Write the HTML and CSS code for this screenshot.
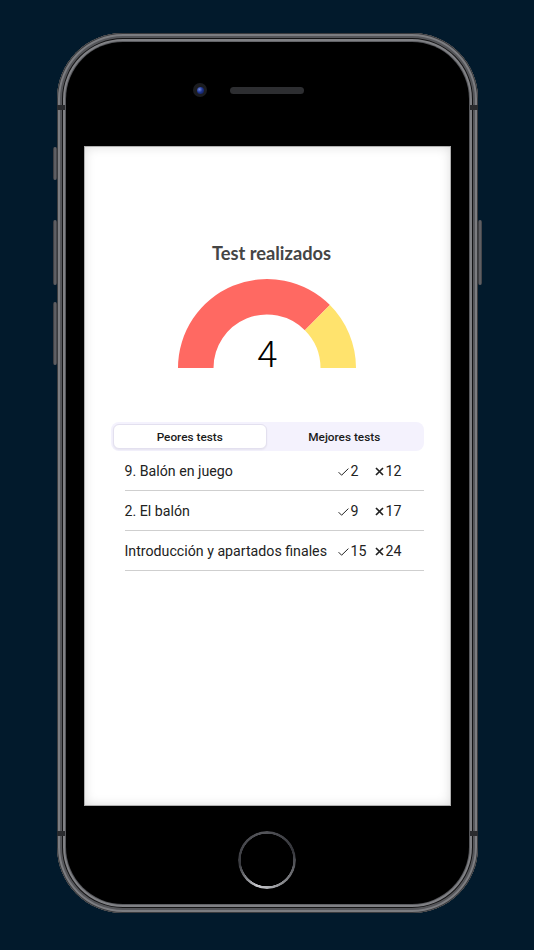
FILE: index.html
```html
<!DOCTYPE html>
<html lang="es">
<head>
<meta charset="utf-8">
<title>Test realizados</title>
<link rel="stylesheet" href="styles.css">
</head>
<body>
<div class="stage">
  <div class="phone">
    <span class="btn btn-mute"></span>
    <span class="btn btn-vol-up"></span>
    <span class="btn btn-vol-down"></span>
    <span class="btn btn-power"></span>
    <span class="band band-tl"></span>
    <span class="band band-tr"></span>
    <span class="band band-bl"></span>
    <span class="band band-br"></span>
    <div class="bezel">
      <div class="top">
        <div class="sensors">
          <span class="camera"><span class="lens"></span></span>
          <span class="speaker"></span>
          <span></span>
        </div>
      </div>
      <div class="screen">
        <h1 class="title">Test realizados</h1>
        <div class="gauge">
          <svg class="gauge-svg" viewBox="0 0 180 90" width="180" height="90">
            <path d="M1 90 A89 89 0 0 1 152.93 27.07 L127.83 52.17 A53.5 53.5 0 0 0 36.5 90 Z" fill="#ff6962"/>
            <path d="M152.93 27.07 A89 89 0 0 1 179 90 L143.5 90 A53.5 53.5 0 0 0 127.83 52.17 Z" fill="#ffe36d"/>
          </svg>
          <span class="gauge-value">4</span>
        </div>
        <div class="tabs">
          <button class="tab tab-active">Peores tests</button>
          <button class="tab">Mejores tests</button>
        </div>
        <ul class="list">
          <li class="row">
            <span class="name">9. Balón en juego</span>
            <span class="stats">
              <span class="stat"><svg class="ico" viewBox="0 0 11 8" width="11" height="8"><path d="M0.6 4.2 L3.6 7.2 L10.4 0.6" fill="none" stroke="#222" stroke-width="1"/></svg>2</span>
              <span class="stat"><svg class="ico" viewBox="0 0 9 9" width="9" height="9"><path d="M1 1 L8 8 M8 1 L1 8" fill="none" stroke="#222" stroke-width="1.7"/></svg>12</span>
            </span>
          </li>
          <li class="row">
            <span class="name">2. El balón</span>
            <span class="stats">
              <span class="stat"><svg class="ico" viewBox="0 0 11 8" width="11" height="8"><path d="M0.6 4.2 L3.6 7.2 L10.4 0.6" fill="none" stroke="#222" stroke-width="1"/></svg>9</span>
              <span class="stat"><svg class="ico" viewBox="0 0 9 9" width="9" height="9"><path d="M1 1 L8 8 M8 1 L1 8" fill="none" stroke="#222" stroke-width="1.7"/></svg>17</span>
            </span>
          </li>
          <li class="row">
            <span class="name">Introducción y apartados finales</span>
            <span class="stats">
              <span class="stat"><svg class="ico" viewBox="0 0 11 8" width="11" height="8"><path d="M0.6 4.2 L3.6 7.2 L10.4 0.6" fill="none" stroke="#222" stroke-width="1"/></svg>15</span>
              <span class="stat"><svg class="ico" viewBox="0 0 9 9" width="9" height="9"><path d="M1 1 L8 8 M8 1 L1 8" fill="none" stroke="#222" stroke-width="1.7"/></svg>24</span>
            </span>
          </li>
        </ul>
      </div>
      <div class="bottom">
        <span class="home"></span>
      </div>
    </div>
  </div>
</div>
</body>
</html>
```

FILE: styles.css
```css
* { box-sizing: border-box; }
html, body { margin: 0; padding: 0; }
body {
  background: #021a2c;
  width: 534px;
  height: 950px;
  overflow: hidden;
  font-family: Roboto, "Liberation Sans", sans-serif;
}
.stage {
  display: flex;
  justify-content: center;
  padding-top: 33px;
}
.phone {
  position: relative;
  width: 421px;
  height: 880px;
  border-radius: 66px;
  padding: 9px;
  background: linear-gradient(90deg, #55565a 0%, #67686c 50%, #55565a 100%);
  box-shadow:
    inset 0 0 0 1px #3a3b3e,
    inset 0 0 0 3px #7c7d81,
    inset 0 0 0 5px #55565a,
    inset 0 0 0 6px #141415,
    inset 0 0 0 8px #808185;
}
.btn {
  position: absolute;
  width: 4px;
  border-radius: 2px;
  background: linear-gradient(90deg, #2e2f33, #6a6b70, #3a3b3f);
}
.btn-mute { left: -4px; top: 114px; height: 33px; }
.btn-vol-up { left: -4px; top: 187px; height: 65px; }
.btn-vol-down { left: -4px; top: 269px; height: 63px; }
.btn-power { right: -4px; top: 187px; height: 65px; }
.band {
  position: absolute;
  width: 8px;
  height: 5px;
  background: #2a2b2e;
}
.band-tl { left: 0; top: 72px; }
.band-tr { right: 0; top: 72px; }
.band-bl { left: 0; top: 798px; }
.band-br { right: 0; top: 798px; }
.bezel {
  height: 100%;
  border-radius: 57px;
  background: #000;
  display: flex;
  flex-direction: column;
  overflow: hidden;
}
.top {
  height: 104px;
  padding-top: 41px;
  flex: none;
}
.sensors {
  display: grid;
  grid-template-columns: 1fr auto 1fr;
  align-items: center;
  height: 14px;
}
.camera {
  justify-self: end;
  margin-right: 23px;
  width: 14px;
  height: 14px;
  border-radius: 50%;
  background: #1b1c20;
  display: flex;
  align-items: center;
  justify-content: center;
}
.lens {
  width: 7px;
  height: 7px;
  border-radius: 50%;
  background: radial-gradient(circle at 35% 35%, #6f86d8 0%, #1f3590 45%, #0b1440 100%);
}
.speaker {
  width: 74px;
  height: 7px;
  border-radius: 4px;
  background: #2d2e31;
}
.screen {
  flex: none;
  height: 660px;
  margin: 0 18px;
  background: #fff;
  box-shadow: inset 0 0 0 1px rgba(0,0,0,0.25), inset 0 0 12px rgba(0,0,0,0.16);
  padding-top: 95px;
  display: flex;
  flex-direction: column;
  align-items: center;
}
.title {
  margin: 0 0 0 9px;
  font-family: Lato, "Open Sans", sans-serif;
  font-weight: 700;
  font-size: 18.3px;
  line-height: 24px;
  color: #454545;
}
.gauge {
  position: relative;
  margin-top: 13px;
  width: 180px;
  height: 90px;
}
.gauge-svg { display: block; }
.gauge-value {
  position: absolute;
  left: 0;
  right: 0;
  bottom: -5px;
  text-align: center;
  font-family: Roboto, sans-serif;
  font-weight: 300;
  font-size: 36px;
  line-height: 36px;
  color: #000;
}
.tabs {
  margin-top: 54px;
  align-self: stretch;
  margin-left: 27px;
  margin-right: 27px;
  height: 29px;
  background: #f4f2fd;
  border-radius: 8px;
  padding: 2px;
  display: grid;
  grid-template-columns: 1fr 1fr;
}
.tab {
  border: 0;
  background: transparent;
  font-family: Roboto, sans-serif;
  font-weight: 500;
  font-size: 11.8px;
  color: #1a1a1a;
  padding: 0;
  border-radius: 6px;
}
.tab-active {
  background: #fff;
  border: 1px solid #e3e0ef;
  box-shadow: 0 1px 2px rgba(0,0,0,0.06);
}
.list {
  list-style: none;
  margin: 0 27px 0 41px;
  padding: 0;
  align-self: stretch;
}
.row {
  height: 40px;
  border-bottom: 1px solid #cfcfcf;
  display: flex;
  align-items: center;
  font-size: 14.2px;
  color: #222;
  padding-right: 12px;
}
.name { flex: 1; white-space: nowrap; }
.stats { display: flex; }
.stat {
  width: 37px;
  display: flex;
  align-items: center;
  white-space: nowrap;
}
.ico { display: block; margin-right: 2px; margin-top: 2px; }
.bottom {
  flex: 1;
  display: flex;
  justify-content: center;
  padding-top: 25px;
}
.home {
  width: 58px;
  height: 58px;
  border-radius: 50%;
  background: conic-gradient(from 200deg, #c8c9cd, #3a3b40 60deg, #55565b 150deg, #34353a 230deg, #c8c9cd 360deg);
  -webkit-mask: radial-gradient(circle, transparent 26px, #000 26.5px);
  mask: radial-gradient(circle, transparent 26px, #000 26.5px);
}
```
